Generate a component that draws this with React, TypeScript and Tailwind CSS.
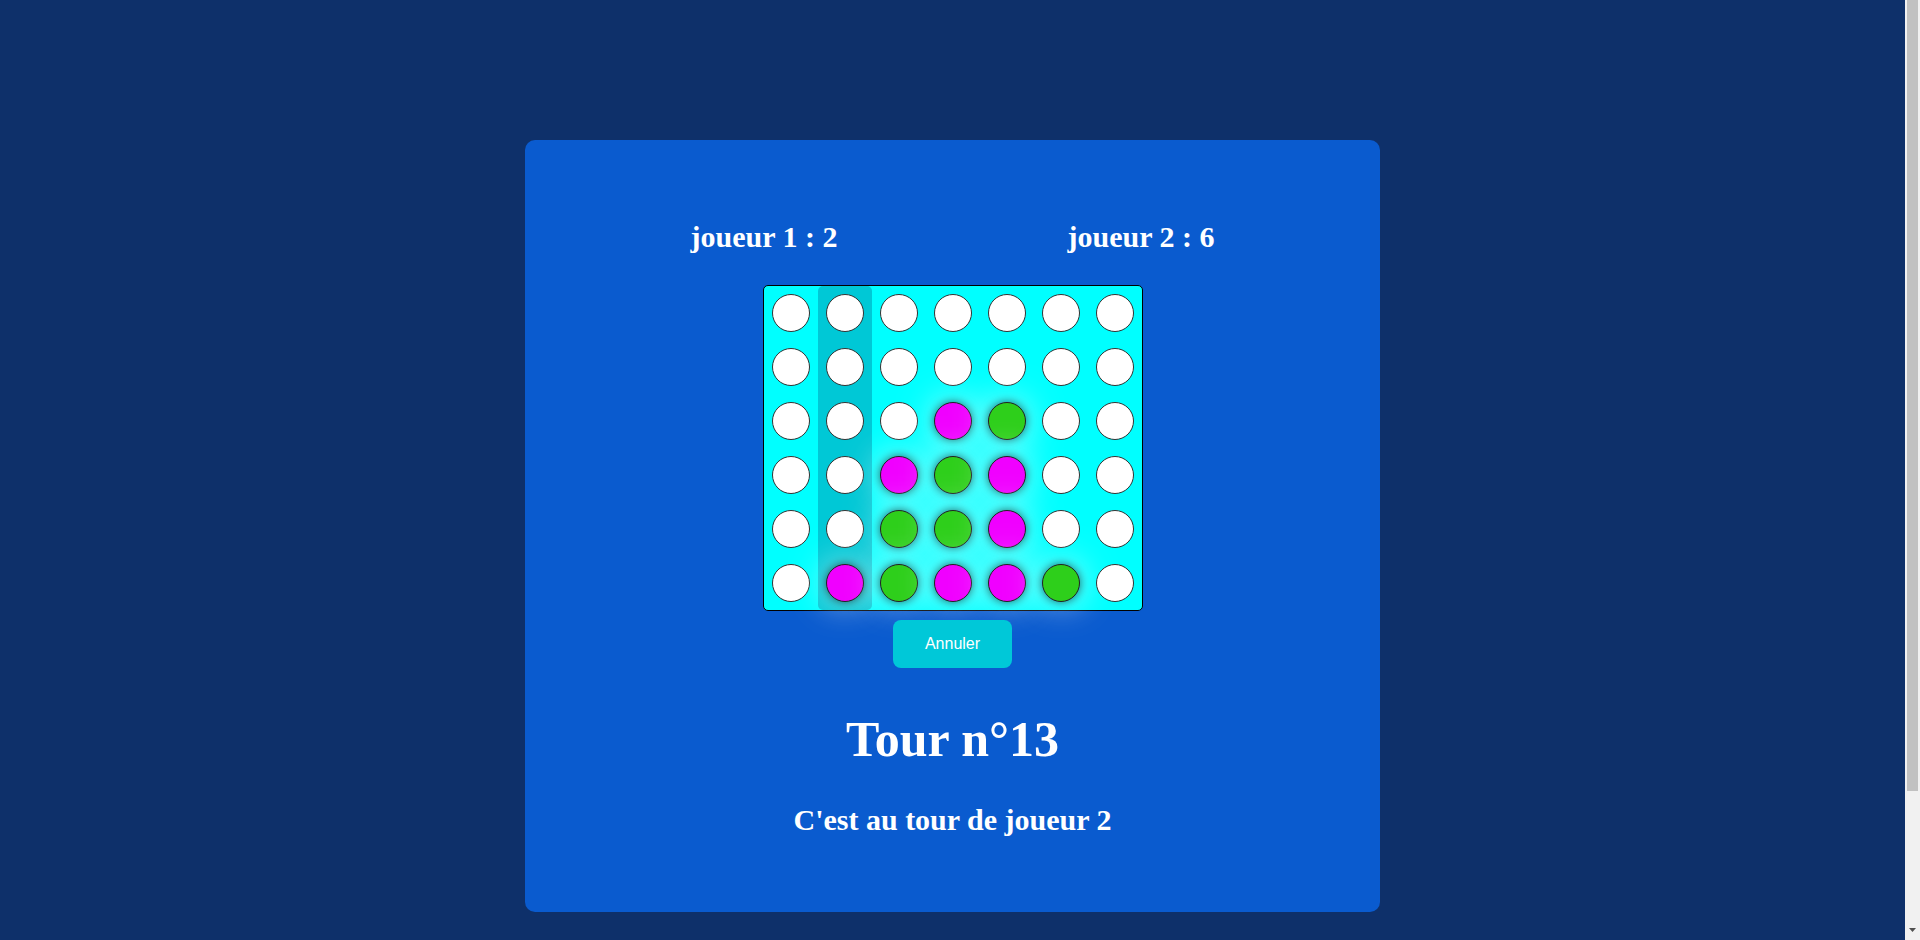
import React, { useState } from 'react';

type Cell = 0 | 1 | 2;

// 0 = vide, 1 = joueur 1 (magenta), 2 = joueur 2 (vert)
const initialGrid: Cell[][] = [
  [0, 0, 0, 0, 0, 0, 0],
  [0, 0, 0, 0, 0, 0, 0],
  [0, 0, 0, 1, 2, 0, 0],
  [0, 0, 1, 2, 1, 0, 0],
  [0, 0, 2, 2, 1, 0, 0],
  [0, 1, 2, 1, 1, 2, 0],
];

function Piece({ value }: { value: Cell }) {
  if (value === 0) {
    return <div className="w-[38px] h-[38px] rounded-full bg-white border border-[#333]" />;
  }
  return (
    <div
      className={`w-[38px] h-[38px] rounded-full border border-[#222] shadow-[0_0_10px_rgba(0,0,0,0.6),0_0_36px_rgba(255,255,255,0.8)] ${
        value === 1 ? 'bg-[#f000ff]' : 'bg-[#2ecf1b]'
      }`}
    />
  );
}

function App() {
  const [grid] = useState<Cell[][]>(initialGrid);
  const [hoverCol, setHoverCol] = useState(1);

  return (
    <div className="flex bg-[#0e306a]">
      <div className="flex-1 pt-[140px] pb-[171px] font-['Liberation_Serif',serif]">
        <div className="w-[855px] mx-auto bg-[#0a5bcf] rounded-[10px] pt-[80px] pb-[75px] flex flex-col items-center text-white">
          <div className="grid grid-cols-2 w-[754px] text-[30px] leading-[34px] font-bold text-center">
            <div>joueur 1 : 2</div>
            <div>joueur 2 : 6</div>
          </div>

          <div className="mt-[31px] flex bg-[#00ffff] border border-black rounded-[5px]">
            {[0, 1, 2, 3, 4, 5, 6].map((col) => (
              <div
                key={col}
                onMouseEnter={() => setHoverCol(col)}
                className={`w-[54px] flex flex-col rounded-[5px] ${col === hoverCol ? 'bg-[#00c8d6]' : ''}`}
              >
                {grid.map((row, r) => (
                  <div key={r} className="h-[54px] flex items-center justify-center">
                    <Piece value={row[col]} />
                  </div>
                ))}
              </div>
            ))}
          </div>

          <button className="mt-[9px] px-8 py-[14px] rounded-lg bg-[#00c8d8] text-white text-base leading-5 font-['Liberation_Sans',Arial,sans-serif]">
            Annuler
          </button>

          <h1 className="mt-[43px] text-[50px] leading-[57px] font-bold">Tour n°13</h1>
          <h2 className="mt-[34px] text-[30px] leading-[35px] font-bold">C'est au tour de joueur 2</h2>
        </div>
      </div>

      {/* barre de défilement */}
      <div className="w-[15px] h-[940px] bg-[#f1f1f1] flex flex-col">
        <div className="h-[791px] mx-[2px] bg-[#c1c1c1]" />
        <div className="flex-1 flex items-end justify-center pb-[8px]">
          <svg width="7" height="4" viewBox="0 0 7 4">
            <path d="M0 0h7L3.5 4z" fill="#505050" />
          </svg>
        </div>
      </div>
    </div>
  );
}

export default App;
